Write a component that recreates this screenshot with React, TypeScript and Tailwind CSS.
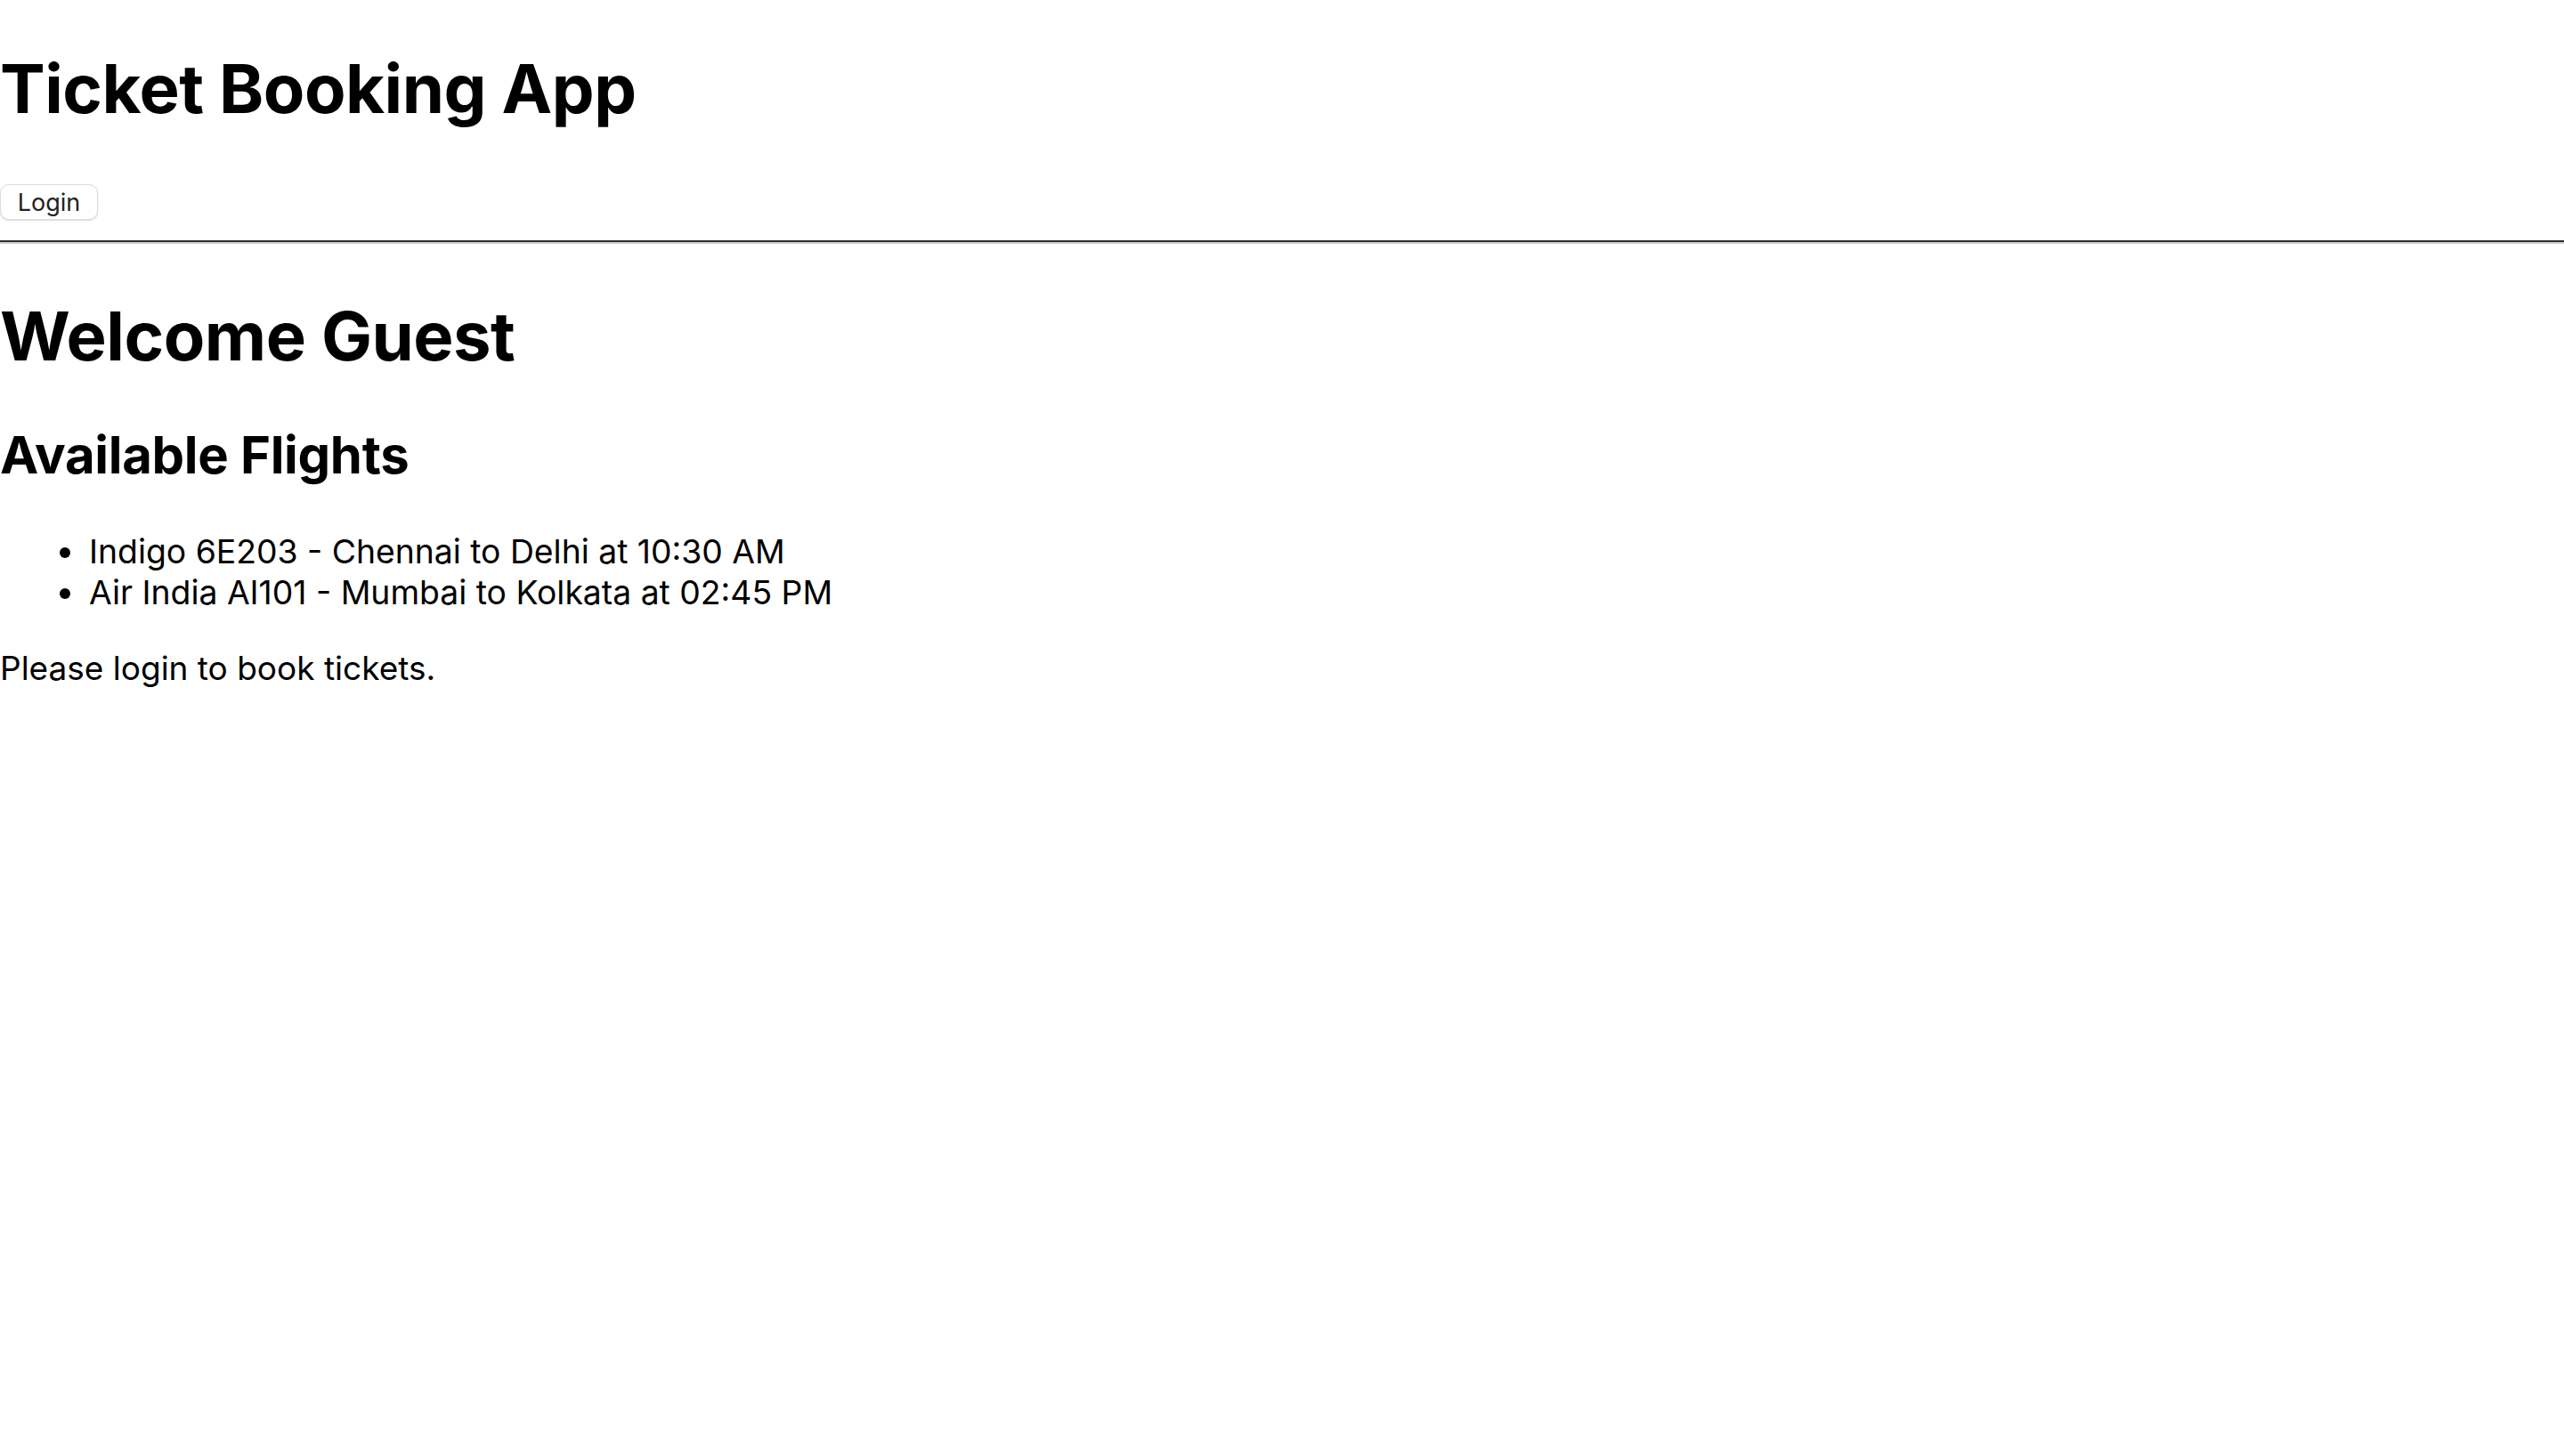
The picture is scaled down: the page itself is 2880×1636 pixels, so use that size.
import React from "react";

type Flight = {
  id: string;
  airline: string;
  code: string;
  from: string;
  to: string;
  time: string;
};

const flights: Flight[] = [
  { id: "1", airline: "Indigo", code: "6E203", from: "Chennai", to: "Delhi", time: "10:30 AM" },
  { id: "2", airline: "Air India", code: "AI101", from: "Mumbai", to: "Kolkata", time: "02:45 PM" },
];

export default function App() {
  const user = null as string | null;

  return (
    <div className="min-h-screen bg-white text-black font-['Inter','Noto_Sans',sans-serif]">
      <h1 className="mt-[54px] text-[76px] leading-[90px] font-bold tracking-[-0.5px]">Ticket Booking App</h1>

      <button
        type="button"
        className="mt-[63px] flex h-[40px] w-[110px] items-center justify-center rounded-[10px] border border-[#dcdcdc] bg-white text-[27px] leading-none text-[#222] shadow-[0_1px_2px_rgba(0,0,0,0.15)]"
      >
        Login
      </button>

      <hr className="mt-[23px] border-0 border-t-2 border-b-2 border-t-[#2e2e2e] border-b-[#cfcfcf]" />

      <h1 className="mt-[58px] text-[76px] leading-[90px] font-bold tracking-[-0.5px]">
        Welcome {user || "Guest"}
      </h1>

      <h2 className="mt-[55px] text-[58px] leading-[68px] font-bold tracking-[-0.3px]">Available Flights</h2>

      <ul className="mt-[52px] list-disc pl-[98px] text-[37.3px] leading-[46px]">
        {flights.map((f) => (
          <li key={f.id} className="pl-[2px]">
            {f.airline} {f.code} - {f.from} to {f.to} at {f.time}
          </li>
        ))}
      </ul>

      <p className="mt-[39px] text-[37px] leading-[46px]">Please login to book tickets.</p>
    </div>
  );
}
